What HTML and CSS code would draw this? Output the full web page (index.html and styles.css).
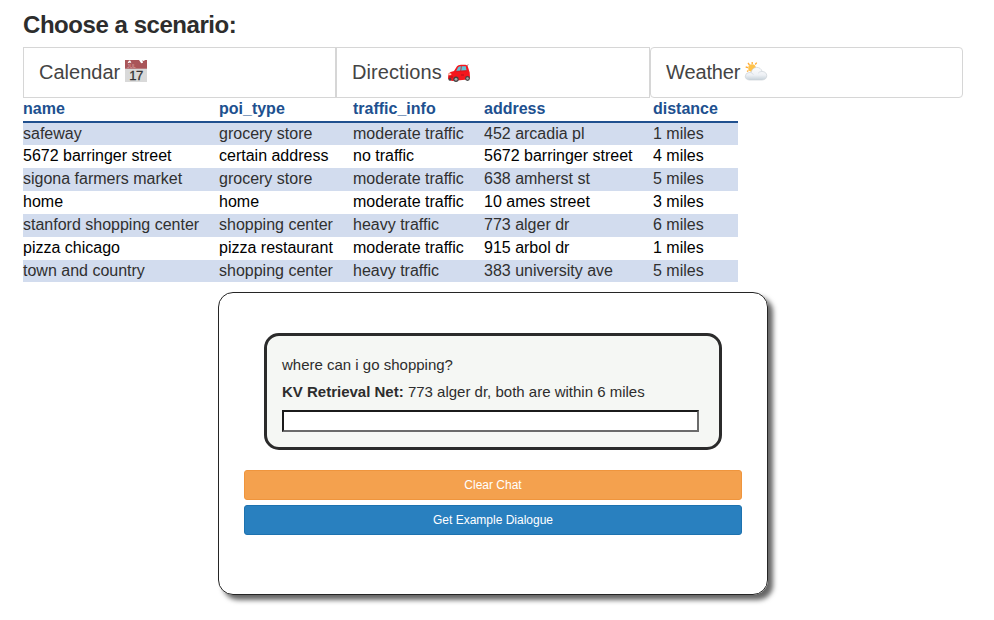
FILE: index.html
```html
<!DOCTYPE html>
<html lang="en">
<head>
<meta charset="utf-8">
<title>Choose a scenario</title>
<link rel="stylesheet" href="styles.css">
</head>
<body>
<h3 class="title">Choose a scenario:</h3>
<div class="tabs">
  <div class="tab"><span class="tab-label calendar">Calendar</span>
    <svg class="icon" viewBox="0 0 24 24">
      <rect x="1" y="1" width="22" height="22" fill="#d9d9d9"/>
      <path d="M1 1H23V9.7H1Z" fill="#a95559"/>
      <path d="M3.5 4.2L5 1.5L6.5 1.8L7.4 4.2L6 3.6ZM15 1H18.3L19 3.8L17.2 4.2Z" fill="#fff"/>
      <path d="M18.5 1.5H20.5" stroke="#eee"/>
      <text x="3" y="8.7" class="cal-month">JUL</text>
      <text x="12" y="21" class="cal-day">17</text>
    </svg>
  </div>
  <div class="tab"><span class="tab-label directions">Directions</span>
    <svg class="icon car" viewBox="0 0 24 24">
      <path d="M1 18L1.5 12.5Q3 10.5 7 10L10 5.2Q11 3.8 14 3.7H18.5Q20 3.8 20.8 5.6L22.7 11.5L23 17L20.5 18.5L5 20Z" fill="#f5161d"/>
      <path d="M9 10.2L11 6.4Q11.8 5.4 14 5.3H18.8L19.5 9.6Z" fill="#62c1d5"/>
      <path d="M14.4 5.3L13.7 10M9 10.3L19.7 9.7" stroke="#c9151b" stroke-width=".8" fill="none"/>
      <path d="M20 5.5L21.3 3.2" stroke="#99484b" stroke-width=".6"/>
      <ellipse cx="2.9" cy="13.3" rx="1.6" ry="1" fill="#ffd5bc"/>
      <path d="M1.5 16H6M14 14H17" stroke="#a01018" stroke-width=".8"/>
      <circle cx="9" cy="18.3" r="2.7" fill="#444"/><circle cx="9" cy="18.3" r="1.4" fill="#aaa"/>
      <circle cx="20.5" cy="17.5" r="2.4" fill="#444"/><circle cx="20.5" cy="17.5" r="1.2" fill="#aaa"/>
      <circle cx="3" cy="18.4" r="1.4" fill="#444"/>
    </svg>
  </div>
  <div class="tab rounded"><span class="tab-label weather">Weather</span>
    <svg class="icon" viewBox="0 0 24 24">
      <defs><linearGradient id="cloud" x2="0" y2="1"><stop stop-color="#fcfcfd"/><stop offset=".6" stop-color="#eef1f5"/><stop offset="1" stop-color="#c6d1d9"/></linearGradient></defs>
      <path d="M8.2 3V5M4 4L5.5 6M12.7 3.6L11.2 5.5M1.7 8L4 8.6M3 12.5L4.5 11.4" stroke="#ffad36" stroke-width="1.3"/>
      <circle cx="8" cy="9" r="3.8" fill="#ffc24b"/>
      <path d="M5.5 21Q1.2 20.6 1.3 17.2Q1.6 13.8 5 13.5Q6.2 13.2 7.2 13.8Q7.7 9 12.4 8.4Q16.7 8.3 18.1 12.4Q22.6 12.8 22.8 16.8Q22.5 20.7 18 21Z" fill="url(#cloud)" stroke="#cbd1d7" stroke-width=".7"/>
      <path d="M7.2 13.8Q9 14.4 9.4 15.8M18.1 12.4Q15.5 12.4 14.2 14.1" stroke="#d0d7de" stroke-width=".7" fill="none"/>
    </svg>
  </div>
</div>
<table class="places">
  <colgroup><col class="c-name"><col class="c-type"><col class="c-traffic"><col class="c-address"><col class="c-distance"></colgroup>
  <thead><tr><th>name</th><th>poi_type</th><th>traffic_info</th><th>address</th><th>distance</th></tr></thead>
  <tbody>
    <tr><td>safeway</td><td>grocery store</td><td>moderate traffic</td><td>452 arcadia pl</td><td>1 miles</td></tr>
    <tr><td>5672 barringer street</td><td>certain address</td><td>no traffic</td><td>5672 barringer street</td><td>4 miles</td></tr>
    <tr><td>sigona farmers market</td><td>grocery store</td><td>moderate traffic</td><td>638 amherst st</td><td>5 miles</td></tr>
    <tr><td>home</td><td>home</td><td>moderate traffic</td><td>10 ames street</td><td>3 miles</td></tr>
    <tr><td>stanford shopping center</td><td>shopping center</td><td>heavy traffic</td><td>773 alger dr</td><td>6 miles</td></tr>
    <tr><td>pizza chicago</td><td>pizza restaurant</td><td>moderate traffic</td><td>915 arbol dr</td><td>1 miles</td></tr>
    <tr class="last"><td>town and country</td><td>shopping center</td><td>heavy traffic</td><td>383 university ave</td><td>5 miles</td></tr>
  </tbody>
</table>
<div class="chat">
  <div class="dialog">
    <p>where can i go shopping?</p>
    <p><b>KV Retrieval Net:</b> 773 alger dr, both are within 6 miles</p>
    <input class="message" type="text" aria-label="Message">
  </div>
  <button class="btn clear">Clear Chat</button>
  <button class="btn example">Get Example Dialogue</button>
</div>
</body>
</html>
```
FILE: styles.css
```css
* { box-sizing: border-box; }
body {
  margin: 0;
  min-height: 620px;
  padding: 11px 31px 0 23px;
  background: #fff;
  color: #2d2d2d;
  font-family: "Liberation Sans", Arial, sans-serif;
}
.title { margin: 0; height: 36px; font-size: 24px; line-height: 28px; font-weight: bold; letter-spacing: -.45px; }
.tabs { display: grid; grid-template-columns: 313px 314px 313px; height: 51px; }
.tab {
  display: flex;
  align-items: center;
  gap: 4px;
  padding: 0 0 2px 15px;
  border: 1px solid #d6d6d6;
  color: #444;
  font-size: 20px;
  line-height: 28px;
}
.rounded { border-radius: 4px; }
.weather { letter-spacing: -.12px; }
.directions { letter-spacing: .08px; }
.icon { width: 24px; height: 24px; margin-top: -2px; }
.car { margin: 2px 0 0 1px; }
.cal-month { font-size: 5px; fill: #dfa5a7; }
.cal-day { font-size: 13px; fill: #333; stroke: #333; stroke-width: .3px; letter-spacing: -.6px; text-anchor: middle; }
.places { width: 715px; table-layout: fixed; border-collapse: separate; border-spacing: 0; font-size: 16px; line-height: 22px; }
.c-name { width: 196px; }
.c-type { width: 134px; }
.c-traffic { width: 131px; }
.c-address { width: 169px; }
.c-distance { width: 85px; }
.places th, .places td { padding: 0; text-align: left; vertical-align: top; height: 23px; white-space: nowrap; }
.places th { height: 25px; color: #20508f; border-bottom: 2px solid #20508f; line-height: 21px; }
.places td { color: #000; line-height: 21px; }
.places tbody tr:nth-child(odd) td { background: #d2dcee; color: #303030; }
.places tbody tr:first-child td, .places .last td { height: 22px; line-height: 22px; }
.chat {
  width: 550px;
  height: 303px;
  margin: 10px 0 0 195px;
  padding: 40px 25px 0;
  border: 1px solid #252525;
  border-radius: 15px;
  box-shadow: 5px 5px 5px #666;
}
.dialog {
  height: 117px;
  margin: 0 20px 20px;
  padding: 18px 20px 0 15px;
  border: 3px solid #2b2b2b;
  border-radius: 15px;
  background: #f5f7f4;
  font-size: 15px;
  line-height: 21px;
}
.dialog p { margin: 0 0 6px; white-space: nowrap; }
.message {
  display: block;
  width: 417px;
  height: 22px;
  margin-top: 8px;
  padding: 0;
  border: 2px solid;
  border-color: #1b1b1b #6b6b6b #6b6b6b #1b1b1b;
  background: #fff;
}
.btn {
  display: block;
  width: 498px;
  height: 30px;
  margin: 0 0 5px;
  padding: 0;
  border: 1px solid;
  border-radius: 3px;
  color: #fff;
  font: 12px/18px "Liberation Sans", Arial, sans-serif;
}
.clear { background: #f4a14e; border-color: #ef953d; }
.example { background: #2980bf; border-color: #1d72af; }
```
